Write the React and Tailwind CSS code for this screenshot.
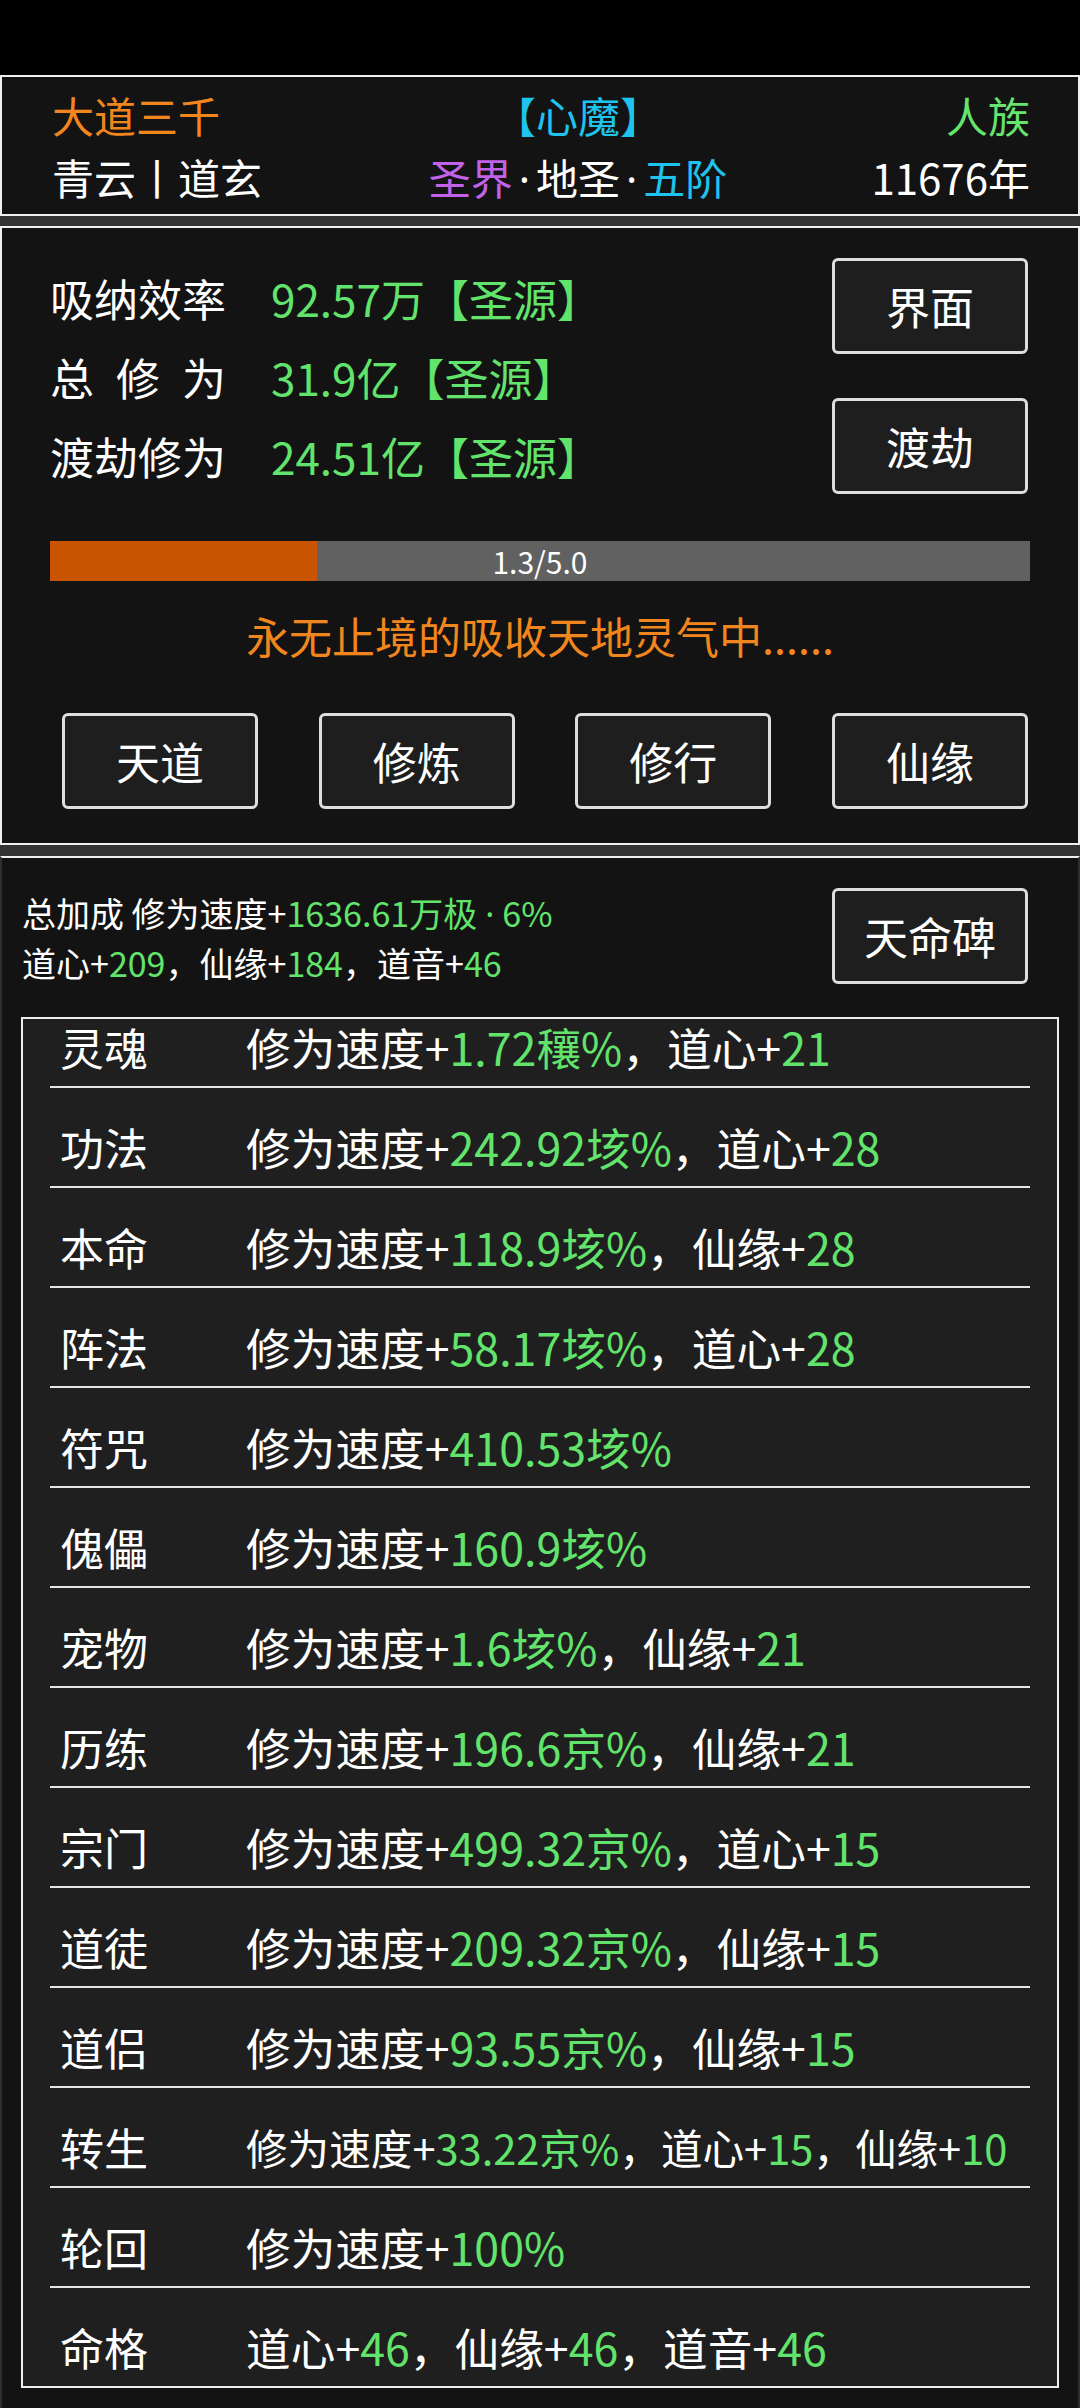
import React from "react";

const GREEN = "text-[#62e46c]";

const items = [
  { name: "灵魂", text: "修为速度+{1.72穰%}，道心+{21}" },
  { name: "功法", text: "修为速度+{242.92垓%}，道心+{28}" },
  { name: "本命", text: "修为速度+{118.9垓%}，仙缘+{28}" },
  { name: "阵法", text: "修为速度+{58.17垓%}，道心+{28}" },
  { name: "符咒", text: "修为速度+{410.53垓%}" },
  { name: "傀儡", text: "修为速度+{160.9垓%}" },
  { name: "宠物", text: "修为速度+{1.6垓%}，仙缘+{21}" },
  { name: "历练", text: "修为速度+{196.6京%}，仙缘+{21}" },
  { name: "宗门", text: "修为速度+{499.32京%}，道心+{15}" },
  { name: "道徒", text: "修为速度+{209.32京%}，仙缘+{15}" },
  { name: "道侣", text: "修为速度+{93.55京%}，仙缘+{15}" },
  { name: "转生", text: "修为速度+{33.22京%}，道心+{15}，仙缘+{10}", small: true },
  { name: "轮回", text: "修为速度+{100%}" },
  { name: "命格", text: "道心+{46}，仙缘+{46}，道音+{46}" },
];

// narrow middle dot (the CJK font draws it full width)
const Dot = ({ className = "mx-[6px]" }) => (
  <span className={`font-['Noto_Sans',sans-serif] ${className}`}>·</span>
);

// "{...}" parts are drawn green
function Rich({ text }) {
  return text.split(/(\{[^}]*\})/).map((part, i) => {
    if (!part.startsWith("{")) return <span key={i}>{part}</span>;
    const bits = part.slice(1, -1).split("·");
    return (
      <span key={i} className={GREEN}>
        {bits.map((b, j) => (
          <React.Fragment key={j}>
            {j > 0 && <Dot className="mx-[8px]" />}
            {b}
          </React.Fragment>
        ))}
      </span>
    );
  });
}

function Btn({ children }) {
  return (
    <div className="w-[196px] h-[96px] shrink-0 flex items-center justify-center border-[3px] border-[#dedede] rounded-[6px] bg-[#1e1e1e] text-[44px] text-white">
      {children}
    </div>
  );
}

const stats = [
  { label: "吸纳效率", value: "92.57万【圣源】" },
  { label: "总修为", value: "31.9亿【圣源】", spread: true },
  { label: "渡劫修为", value: "24.51亿【圣源】" },
];

export default function App() {
  return (
    <div className="w-[1080px] h-[2408px] bg-black flex flex-col overflow-hidden text-white font-['Noto_Sans_CJK_SC','Noto_Sans',sans-serif]">
      <div className="h-[75px] shrink-0" />

      {/* header */}
      <div className="h-[141px] shrink-0 border-2 border-[#f0f0f0] bg-[#131313] pl-[50px] pr-[48px] pt-[7px]">
        <div className="grid grid-cols-[300px_452px_1fr] text-[42px]">
          <div className="h-[62px] leading-[62px] text-[#f2861e]">大道三千</div>
          <div className="h-[62px] leading-[62px] text-center text-[#1ec3ee]">【心魔】</div>
          <div className="h-[62px] leading-[62px] text-right text-[#66e46e]">人族</div>
          <div className="h-[62px] leading-[62px]">青云丨道玄</div>
          <div className="h-[62px] leading-[62px] text-center">
            <span className="text-[#c262e8]">圣界</span>
            <Dot />
            地圣
            <Dot />
            <span className="text-[#1ec3ee]">五阶</span>
          </div>
          <div className="h-[62px] leading-[62px] text-right">11676年</div>
        </div>
      </div>

      <div className="h-[10px] shrink-0 bg-[#333333]" />

      {/* cultivation panel */}
      <div className="h-[619px] shrink-0 border-2 border-[#f0f0f0] bg-[#131313] px-[48px] pt-[30px]">
        <div className="flex justify-between">
          <div className="flex flex-col">
            {stats.map((s) => (
              <div key={s.label} className="h-[79px] flex items-center text-[44px]">
                <div className="w-[221px] shrink-0">
                  {s.spread ? (
                    <div className="w-[176px] flex justify-between">
                      <span>总</span>
                      <span>修</span>
                      <span>为</span>
                    </div>
                  ) : (
                    s.label
                  )}
                </div>
                <div className={GREEN}>{s.value}</div>
              </div>
            ))}
          </div>
          <div className="flex flex-col gap-[44px] mr-[2px]">
            <Btn>界面</Btn>
            <Btn>渡劫</Btn>
          </div>
        </div>

        <div className="relative mt-[46px] h-[40px] bg-[#616161]">
          <div className="absolute left-0 top-0 h-full w-[27.2%] bg-[#c85300]" />
          <div className="relative h-full flex items-center justify-center text-[30px] leading-none text-white">
            1.3/5.0
          </div>
        </div>

        <div className="mt-[24px] h-[60px] leading-[60px] text-center text-[43px] text-[#f2861e]">
          永无止境的吸收天地灵气中......
        </div>

        <div className="mt-[48px] pl-[12px] pr-[2px] flex justify-between">
          <Btn>天道</Btn>
          <Btn>修炼</Btn>
          <Btn>修行</Btn>
          <Btn>仙缘</Btn>
        </div>
      </div>

      <div className="h-[11px] shrink-0 bg-[#333333]" />

      {/* bonus panel */}
      <div className="flex-1 min-h-0 border-t-2 border-x-2 border-t-[#f0f0f0] border-x-[#2e2e2e] bg-[#131313] px-[19px] pt-[30px]">
        <div className="h-[96px] flex justify-between items-start">
          <div className="pl-[1px] text-[34px]">
            <div className="h-[50px] leading-[50px]">
              <Rich text="总加成 修为速度+{1636.61万极·6%}" />
            </div>
            <div className="h-[50px] leading-[50px]">
              <Rich text="道心+{209}，仙缘+{184}，道音+{46}" />
            </div>
          </div>
          <div className="mr-[31px]">
            <Btn>天命碑</Btn>
          </div>
        </div>

        <div className="mt-[33px] h-[1371px] border-2 border-[#eeeeee] bg-[#1f1f1f] overflow-hidden">
          <div className="mt-[-31px] px-[27px]">
            {items.map((it) => (
              <div
                key={it.name}
                className="h-[100px] pt-[20px] border-b-2 border-[#e6e6e6] flex items-center whitespace-nowrap"
              >
                <div className="w-[196px] shrink-0 pl-[10px] text-[44px]">{it.name}</div>
                <div className={it.small ? "text-[41.6px]" : "text-[44.7px]"}>
                  <Rich text={it.text} />
                </div>
              </div>
            ))}
          </div>
        </div>
      </div>
    </div>
  );
}
